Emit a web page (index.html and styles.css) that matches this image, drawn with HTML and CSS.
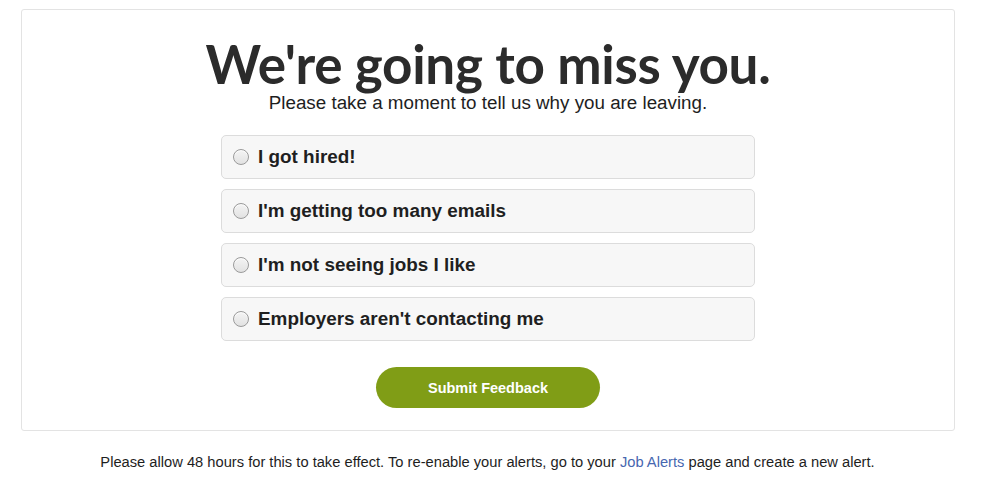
FILE: index.html
```html
<!DOCTYPE html>
<html>
<head>
<meta charset="utf-8">
<link rel="stylesheet" href="styles.css">
</head>
<body>
<div class="card">
  <h1 class="title">We're going to miss you.</h1>
  <p class="subtitle">Please take a moment to tell us why you are leaving.</p>
  <form class="options">
    <label class="option"><input type="radio" name="reason"><span class="radio"></span><span class="option-text">I got hired!</span></label>
    <label class="option"><input type="radio" name="reason"><span class="radio"></span><span class="option-text">I'm getting too many emails</span></label>
    <label class="option"><input type="radio" name="reason"><span class="radio"></span><span class="option-text">I'm not seeing jobs I like</span></label>
    <label class="option"><input type="radio" name="reason"><span class="radio"></span><span class="option-text">Employers aren't contacting me</span></label>
    <button type="button" class="submit">Submit Feedback</button>
  </form>
</div>
<p class="footer">Please allow 48 hours for this to take effect. To re-enable your alerts, go to your <a href="#" class="link">Job Alerts</a> page and create a new alert.</p>
</body>
</html>
```
FILE: styles.css
```css
html, body {
  margin: 0;
  padding: 0;
  background: #fff;
}
body {
  font-family: "Liberation Sans", Arial, sans-serif;
  color: #222;
}
.card {
  box-sizing: border-box;
  width: 934px;
  height: 422px;
  margin: 9px 0 0 21px;
  border: 1px solid #e3e3e3;
  border-radius: 3px;
  display: flex;
  flex-direction: column;
  align-items: center;
}
.title {
  font-family: Lato, "Liberation Sans", sans-serif;
  font-weight: 700;
  font-size: 53px;
  line-height: 56px;
  color: #2b2b2b;
  margin: 26px 0 0 0;
  letter-spacing: -0.3px;
}
.subtitle {
  font-size: 18.8px;
  line-height: 20px;
  margin: 1px 0 0 0;
  color: #1e1e1e;
}
.options {
  display: flex;
  flex-direction: column;
  align-items: center;
  gap: 10px;
  margin-top: 22px;
}
.option {
  box-sizing: border-box;
  width: 534px;
  height: 44px;
  background: #f7f7f7;
  border: 1px solid #dcdcdc;
  border-radius: 5px;
  display: flex;
  align-items: center;
  padding-left: 11px;
  cursor: pointer;
}
.option input {
  display: none;
}
.radio {
  box-sizing: border-box;
  width: 16px;
  height: 16px;
  border-radius: 50%;
  border: 1px solid #9a9a9a;
  background: linear-gradient(#f4f4f4, #e2e2e2);
  box-shadow: inset 0 1px 1px rgba(255,255,255,0.9);
  flex: none;
}
.option-text {
  font-weight: 700;
  font-size: 18.9px;
  color: #1f1f1f;
  margin-left: 9px;
}
.submit {
  margin-top: 16px;
  width: 224px;
  height: 41px;
  border: none;
  border-radius: 21px;
  background: #809d16;
  color: #fff;
  font-family: "Liberation Sans", Arial, sans-serif;
  font-weight: 700;
  font-size: 14.5px;
  cursor: pointer;
}
.footer {
  margin: 23px 0 0 0;
  text-align: center;
  font-size: 14.7px;
  color: #1e1e1e;
  width: 975px;
}
.link {
  color: #4767b0;
  text-decoration: none;
}
```
